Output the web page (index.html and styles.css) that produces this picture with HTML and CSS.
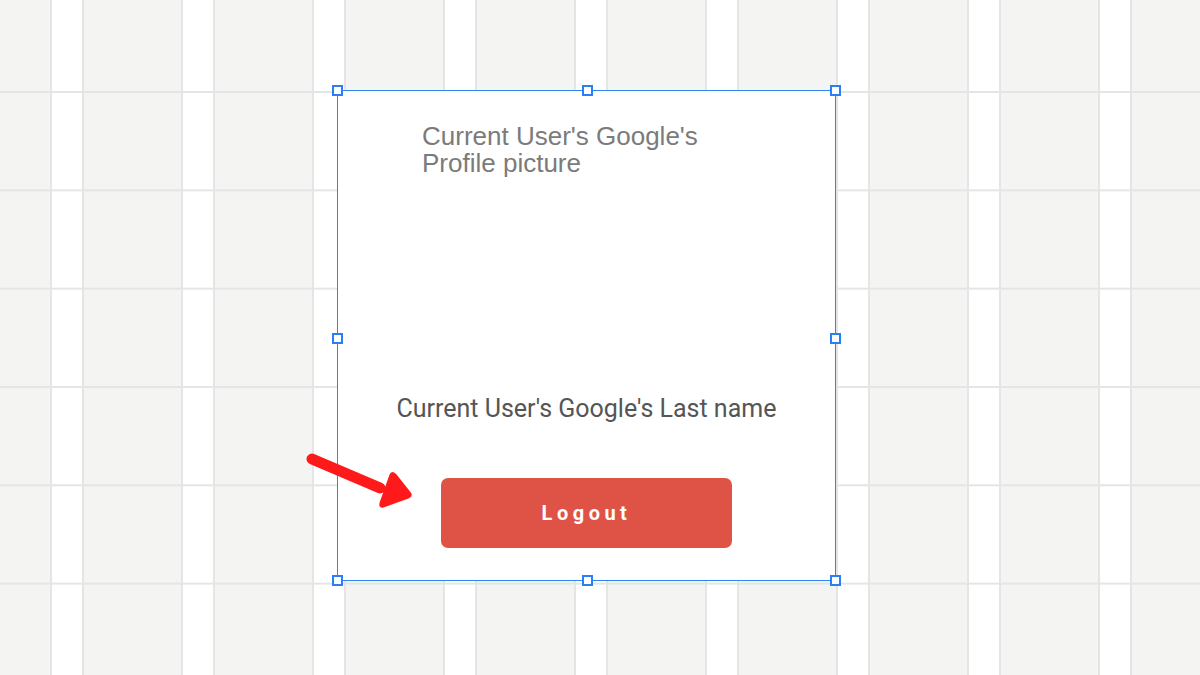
FILE: index.html
```html
<!DOCTYPE html>
<html>
<head>
<meta charset="utf-8">
<link rel="stylesheet" href="styles.css">
</head>
<body>
<div class="canvas">
  <div class="frame">
    <span class="handle h-tl"></span>
    <span class="handle h-tc"></span>
    <span class="handle h-tr"></span>
    <span class="handle h-ml"></span>
    <span class="handle h-mr"></span>
    <span class="handle h-bl"></span>
    <span class="handle h-bc"></span>
    <span class="handle h-br"></span>
    <div class="profile">Current User's Google's<br>Profile picture</div>
    <div class="spacer"></div>
    <div class="lastname">Current User's Google's Last name</div>
    <button class="logout">Logout</button>
  </div>
  <svg class="arrow" width="120" height="70" viewBox="0 0 120 70">
    <line x1="12" y1="14" x2="80" y2="43" stroke="#fe1a1a" stroke-width="11" stroke-linecap="round"/>
    <path d="M91 30 Q92 27 95 30 L110 49 Q111 51 108 52 L83 61 Q80 62 81 58 Z" fill="#fe1a1a" stroke="#fe1a1a" stroke-width="3" stroke-linejoin="round"/>
  </svg>
</div>
</body>
</html>
```
FILE: styles.css
```css
html, body {
  margin: 0;
  padding: 0;
  width: 1200px;
  height: 675px;
  overflow: hidden;
}
body {
  background-color: #f4f4f3;
  background-image:
    linear-gradient(to bottom, #e5e5e5 0, #e5e5e5 2px, transparent 2px),
    linear-gradient(to right, transparent 0, transparent 50.5px, #e5e5e5 50.5px, #e5e5e5 52.5px, #ffffff 52.5px, #ffffff 82px, #e5e5e5 82px, #e5e5e5 84px, transparent 84px);
  background-size: 100% 98.33px, 131px 100%;
  background-position: 0 91px, 0 0;
  font-family: "Liberation Sans", Arial, sans-serif;
}
.canvas {
  position: relative;
  padding: 90px 0 0 337px;
}
.frame {
  position: relative;
  box-sizing: border-box;
  width: 499px;
  height: 491px;
  background: #ffffff;
  border: 1px solid #2f86f2;
  display: flex;
  flex-direction: column;
  align-items: center;
  padding: 32px 0 32px;
}
.handle {
  position: absolute;
  width: 7px;
  height: 7px;
  background: #fff;
  border: 2px solid #2a7ff5;
}
.h-tl { left: -6px; top: -6px; }
.h-tc { left: 244px; top: -6px; }
.h-tr { right: -6px; top: -6px; }
.h-ml { left: -6px; top: 242px; }
.h-mr { right: -6px; top: 242px; }
.h-bl { left: -6px; bottom: -6px; }
.h-bc { left: 244px; bottom: -6px; }
.h-br { right: -6px; bottom: -6px; }
.profile {
  align-self: flex-start;
  margin-left: 84px;
  font-family: "Liberation Sans", Arial, sans-serif;
  font-size: 26px;
  line-height: 27px;
  color: #7b7b7b;
}
.spacer { flex: 1; }
.lastname {
  font-family: Roboto, "Liberation Sans", sans-serif;
  font-size: 25px;
  line-height: 30px;
  color: #555555;
  margin-bottom: 54px;
}
.logout {
  width: 291px;
  height: 70px;
  border: none;
  border-radius: 7px;
  background: #df5246;
  color: #ffffff;
  font-family: Roboto, "Liberation Sans", sans-serif;
  font-weight: 700;
  font-size: 20px;
  letter-spacing: 4.5px;
  padding: 0;
}
.arrow {
  position: absolute;
  left: 300px;
  top: 445px;
}
```
